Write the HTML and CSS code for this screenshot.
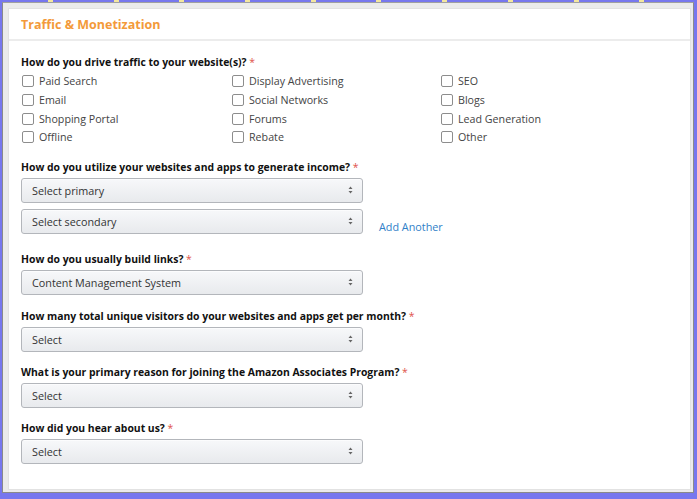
FILE: index.html
```html
<!DOCTYPE html>
<html>
<head>
<meta charset="utf-8">
<link rel="stylesheet" href="styles.css">
</head>
<body>
<div class="dashes"></div>
<div class="frame">
  <div class="panel">
    <div class="panel-head">Traffic &amp; Monetization</div>
    <div class="panel-body">
      <div class="group first">
        <div class="q">How do you drive traffic to your website(s)? <span class="req">*</span></div>
        <div class="checks">
          <label class="chk"><span class="box"></span>Paid Search</label>
          <label class="chk"><span class="box"></span>Display Advertising</label>
          <label class="chk"><span class="box"></span>SEO</label>
          <label class="chk"><span class="box"></span>Email</label>
          <label class="chk"><span class="box"></span>Social Networks</label>
          <label class="chk"><span class="box"></span>Blogs</label>
          <label class="chk"><span class="box"></span>Shopping Portal</label>
          <label class="chk"><span class="box"></span>Forums</label>
          <label class="chk"><span class="box"></span>Lead Generation</label>
          <label class="chk"><span class="box"></span>Offline</label>
          <label class="chk"><span class="box"></span>Rebate</label>
          <label class="chk"><span class="box"></span>Other</label>
        </div>
      </div>

      <div class="group">
        <div class="q">How do you utilize your websites and apps to generate income? <span class="req">*</span></div>
        <div class="sel">Select primary<svg class="arr" width="5" height="8" viewBox="0 0 5 8"><path d="M2.5 0.5 L4.5 3 L0.5 3 Z M2.5 7.5 L4.5 5 L0.5 5 Z" fill="#666"/></svg></div>
        <div class="sel-row">
          <div class="sel">Select secondary<svg class="arr" width="5" height="8" viewBox="0 0 5 8"><path d="M2.5 0.5 L4.5 3 L0.5 3 Z M2.5 7.5 L4.5 5 L0.5 5 Z" fill="#666"/></svg></div>
          <a class="add">Add Another</a>
        </div>
      </div>

      <div class="group after-add">
        <div class="q">How do you usually build links? <span class="req">*</span></div>
        <div class="sel">Content Management System<svg class="arr" width="5" height="8" viewBox="0 0 5 8"><path d="M2.5 0.5 L4.5 3 L0.5 3 Z M2.5 7.5 L4.5 5 L0.5 5 Z" fill="#666"/></svg></div>
      </div>

      <div class="group wide">
        <div class="q">How many total unique visitors do your websites and apps get per month? <span class="req">*</span></div>
        <div class="sel">Select<svg class="arr" width="5" height="8" viewBox="0 0 5 8"><path d="M2.5 0.5 L4.5 3 L0.5 3 Z M2.5 7.5 L4.5 5 L0.5 5 Z" fill="#666"/></svg></div>
      </div>

      <div class="group">
        <div class="q">What is your primary reason for joining the Amazon Associates Program? <span class="req">*</span></div>
        <div class="sel">Select<svg class="arr" width="5" height="8" viewBox="0 0 5 8"><path d="M2.5 0.5 L4.5 3 L0.5 3 Z M2.5 7.5 L4.5 5 L0.5 5 Z" fill="#666"/></svg></div>
      </div>

      <div class="group">
        <div class="q">How did you hear about us? <span class="req">*</span></div>
        <div class="sel">Select<svg class="arr" width="5" height="8" viewBox="0 0 5 8"><path d="M2.5 0.5 L4.5 3 L0.5 3 Z M2.5 7.5 L4.5 5 L0.5 5 Z" fill="#666"/></svg></div>
      </div>
    </div>
  </div>
</div>
</body>
</html>
```

FILE: styles.css
```css
html, body {
  margin: 0;
  padding: 0;
}
body {
  background: #7777ee;
  font-family: "Open Sans", "Noto Sans", sans-serif;
  width: 697px;
  height: 499px;
  overflow: hidden;
}
.dashes {
  height: 2px;
  margin-left: 48px;
  background: repeating-linear-gradient(90deg, #f3e6a0 0, #f3e6a0 5px, transparent 5px, transparent 65.7px);
}
.frame {
  margin: 0 3px 0 2px;
  height: 491px;
  box-sizing: border-box;
  border: 1px solid #8a8a8a;
  border-top-color: #a0a0a0;
  background: #ebebeb;
  padding: 5px 2px 2px 5px;
}
.panel {
  background: #fff;
  height: 100%;
  box-sizing: border-box;
  border: 1px solid #e2e2e2;
}
.panel-head {
  height: 32px;
  box-sizing: border-box;
  padding: 8px 0 0 12px;
  font-size: 12.5px;
  font-weight: 700;
  color: #f39a3a;
  border-bottom: 2px solid #ececec;
  line-height: 16px;
}
.panel-body {
  padding: 0 0 0 12px;
}
.group {
  margin-top: 13px;
}
.group.first {
  margin-top: 14px;
}
.group.after-add {
  margin-top: 18px;
}
.group.wide {
  margin-top: 14px;
}
.q {
  font-size: 10.4px;
  font-weight: 700;
  color: #111;
  line-height: 14px;
  margin-bottom: 4px;
}
.req {
  color: #e0524a;
  font-weight: 400;
}
.checks {
  display: grid;
  grid-template-columns: 210px 209px 200px;
  grid-auto-rows: 18.7px;
  margin-top: -1px;
}
.chk {
  display: flex;
  align-items: center;
  font-size: 10.7px;
  color: #444;
}
.box {
  width: 12px;
  height: 12px;
  border: 1px solid #8d8d8d;
  border-radius: 2px;
  box-sizing: border-box;
  margin: 0 5px 0 1px;
  flex: none;
  background: #fff;
}
.sel {
  width: 342px;
  height: 25px;
  box-sizing: border-box;
  border: 1px solid #b3b6bb;
  border-radius: 3px;
  background: linear-gradient(#f7f8fa, #e8eaed);
  box-shadow: 0 1px 0 rgba(255,255,255,0.6) inset;
  display: flex;
  align-items: center;
  padding: 0 9px 0 10px;
  font-size: 10.8px;
  color: #333;
}
.arr {
  margin-left: auto;
}
.sel + .sel-row {
  margin-top: 6px;
}
.sel-row {
  display: flex;
  align-items: center;
}
.add {
  margin-left: 16px;
  margin-top: 10px;
  font-size: 10.8px;
  color: #2f80c8;
}
```
